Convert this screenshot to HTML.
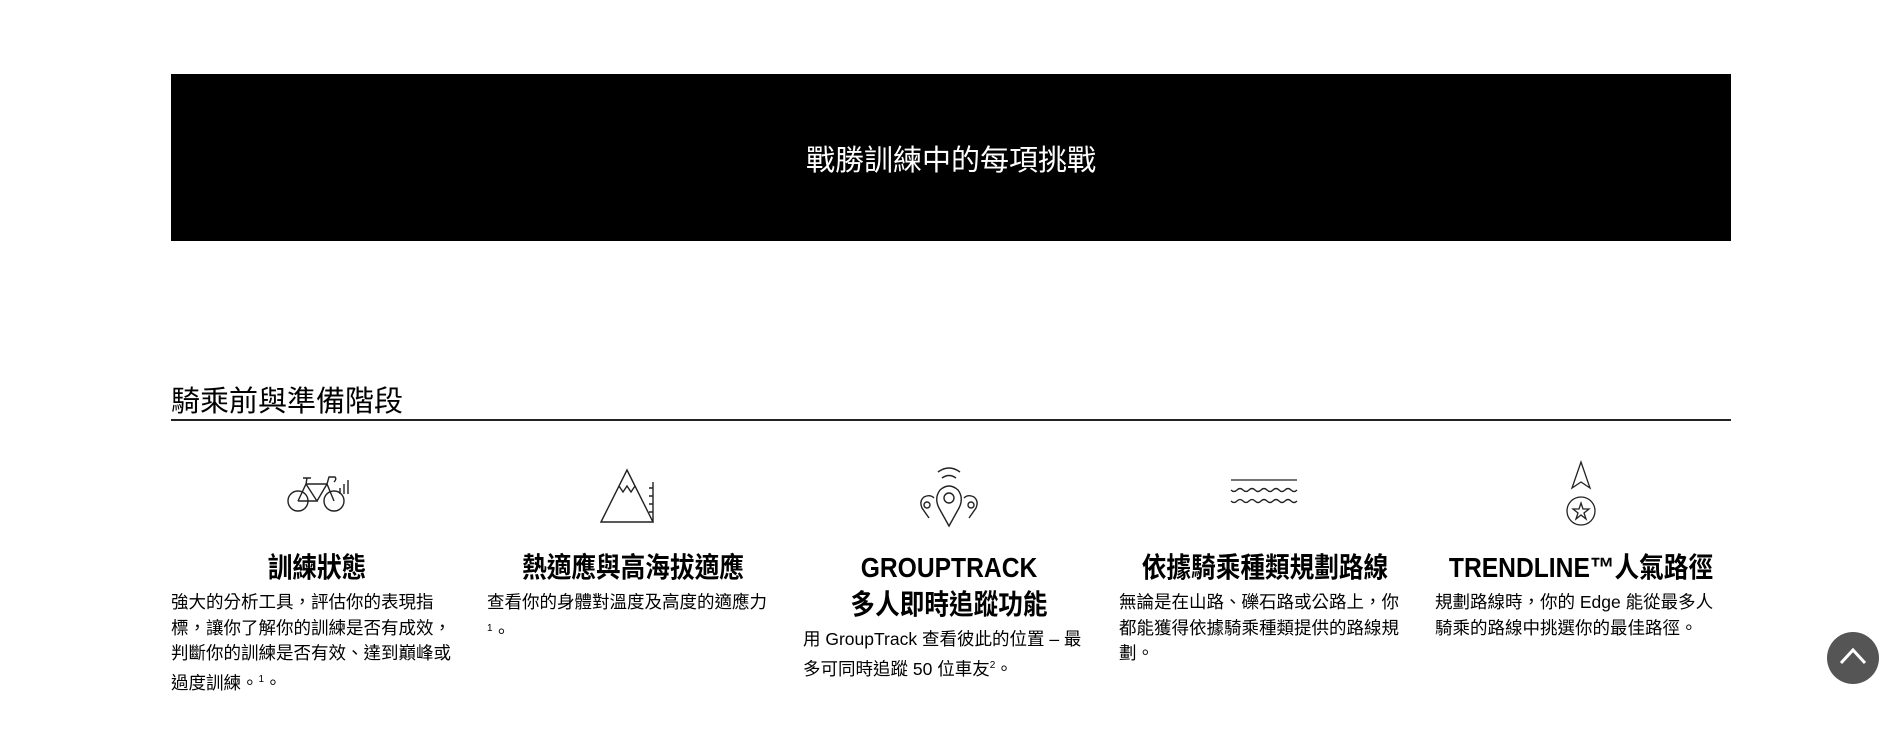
<!DOCTYPE html>
<html><head><meta charset="utf-8"><style>
*{margin:0;padding:0;box-sizing:border-box}
body{width:1899px;height:733px;background:#fff;font-family:"Liberation Sans","Noto Sans CJK TC",sans-serif;color:#000;position:relative;overflow:hidden}
.banner{position:absolute;left:171px;top:74px;width:1560px;height:167px;background:#000;color:#fff;font-size:29px;display:flex;align-items:center;justify-content:center}
.h2{position:absolute;left:171px;top:385px;font-size:29px;line-height:34px}
.rule{position:absolute;left:171px;top:419px;width:1560px;height:2px;background:#222}
.col{position:absolute;top:458px;width:292px}
.icon{height:72px;display:flex;justify-content:center}
.t{text-align:center;font-weight:bold;font-size:28px;line-height:37px;margin:19px -20px 0;white-space:nowrap;transform:scaleX(.88)}
.b{font-size:17.5px;line-height:25.5px;margin-top:4px;width:284px}
sup{font-size:10px}
.top{position:absolute;left:1827px;top:632px;width:52px;height:52px;border-radius:50%;background:#555}
</style></head><body>
<div class="banner">戰勝訓練中的每項挑戰</div>
<div class="h2">騎乘前與準備階段</div>
<div class="rule"></div>

<div class="col" style="left:171px">
<div class="icon"><svg width="80" height="72" viewBox="0 0 80 72" fill="none" stroke="#222" stroke-width="1.4">
<circle cx="21" cy="43" r="10"/><circle cx="57" cy="43" r="10"/>
<path d="M21 43 L29 26 L50 26 L57 43 M29 26 L40 43 L21 43 M40 43 L50 26 M26 20 L34 20 M30 20 L29 26 M50 26 L52 19 L58 19 Q60 21 57 24"/>
<path d="M63 36 V30 M67 36 V26 M71 36 V22"/></svg></div>
<div class="t">訓練狀態</div>
<div class="b">強大的分析工具，評估你的表現指標，讓你了解你的訓練是否有成效，判斷你的訓練是否有效、達到巔峰或過度訓練。<sup>1</sup>。</div>
</div>

<div class="col" style="left:487px">
<div class="icon"><svg width="80" height="72" viewBox="0 0 80 72" fill="none" stroke="#222" stroke-width="1.4">
<path d="M8 64 L34 12 L60 64 Z M26 28 L30 34 L34 28 L38 34 L42 28 M60 24 V64 M56 30 H60 M56 38 H60 M56 46 H60 M56 54 H60"/></svg></div>
<div class="t">熱適應與高海拔適應</div>
<div class="b">查看你的身體對溫度及高度的適應力<sup>1</sup>。</div>
</div>

<div class="col" style="left:803px">
<div class="icon"><svg width="80" height="72" viewBox="0 0 80 72" fill="none" stroke="#222" stroke-width="1.4">
<path d="M29 14 Q40 6 51 14 M33 20 Q40 15 47 20"/>
<path d="M40 68 L30 50 Q25 40 31 32 Q40 24 49 32 Q55 40 50 50 Z"/><circle cx="40" cy="40" r="5"/>
<path d="M20 60 L13 50 Q10 43 15 39 Q21 36 25 40"/><circle cx="18" cy="47" r="3"/>
<path d="M60 60 L67 50 Q70 43 65 39 Q59 36 55 40"/><circle cx="62" cy="47" r="3"/></svg></div>
<div class="t">GROUPTRACK<br>多人即時追蹤功能</div>
<div class="b">用 GroupTrack 查看彼此的位置 – 最多可同時追蹤 50 位車友<sup>2</sup>。</div>
</div>

<div class="col" style="left:1119px">
<div class="icon"><svg width="80" height="72" viewBox="0 0 80 72" fill="none" stroke="#222" stroke-width="1.3">
<path d="M6 22 H72"/>
<path d="M6 32 q3 3 6 0 t6 0 t6 0 t6 0 t6 0 t6 0 t6 0 t6 0 t6 0 t6 0 t6 0"/>
<path d="M6 43 q3 3 6 0 t6 0 t6 0 t6 0 t6 0 t6 0 t6 0 t6 0 t6 0 t6 0 t6 0"/></svg></div>
<div class="t">依據騎乘種類規劃路線</div>
<div class="b">無論是在山路、礫石路或公路上，你都能獲得依據騎乘種類提供的路線規劃。</div>
</div>

<div class="col" style="left:1435px">
<div class="icon"><svg width="80" height="72" viewBox="0 0 80 72" fill="none" stroke="#222" stroke-width="1.3">
<path d="M40 4 L31 30 L40 24 L49 30 Z"/><circle cx="40" cy="53" r="14"/>
<path d="M40 45 L42 51 L48 51 L43 55 L45 61 L40 57 L35 61 L37 55 L32 51 L38 51 Z"/></svg></div>
<div class="t">TRENDLINE™人氣路徑</div>
<div class="b">規劃路線時，你的 Edge 能從最多人騎乘的路線中挑選你的最佳路徑。</div>
</div>

<div class="top"><svg width="52" height="52" viewBox="0 0 52 52"><path d="M14 31 L26 18 L38 31" fill="none" stroke="#fff" stroke-width="3"/></svg></div>
</body></html>
